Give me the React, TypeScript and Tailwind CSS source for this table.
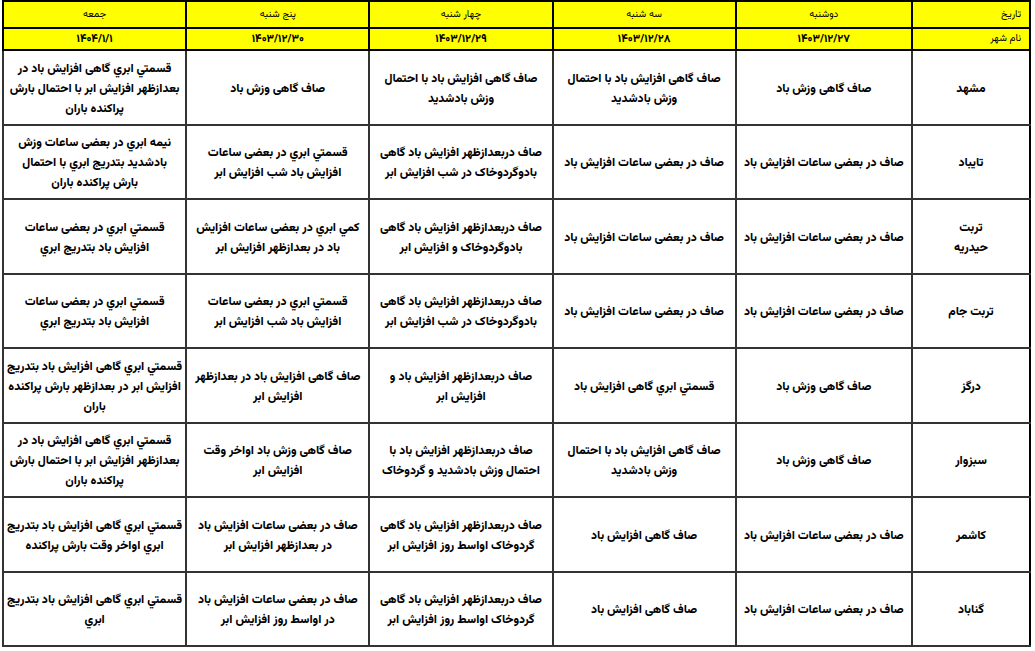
import React from "react";

const days = [
  { day: "دوشنبه", date: "۱۴۰۳/۱۲/۲۷" },
  { day: "سه شنبه", date: "۱۴۰۳/۱۲/۲۸" },
  { day: "چهار شنبه", date: "۱۴۰۳/۱۲/۲۹" },
  { day: "پنج شنبه", date: "۱۴۰۳/۱۲/۳۰" },
  { day: "جمعه", date: "۱۴۰۴/۱/۱" },
];

const rows: { city: string; cells: string[] }[] = [
  {
    city: "مشهد",
    cells: [
      "صاف گاهی وزش باد",
      "صاف گاهی افزایش باد با احتمال\nوزش بادشدید",
      "صاف گاهی افزایش باد با احتمال\nوزش بادشدید",
      "صاف گاهی وزش باد",
      "قسمتي ابري گاهی افزایش باد در\nبعدازظهر افزایش ابر با احتمال بارش\nپراکنده باران",
    ],
  },
  {
    city: "تایباد",
    cells: [
      "صاف در بعضی ساعات افزایش باد",
      "صاف در بعضی ساعات افزایش باد",
      "صاف دربعدازظهر افزایش باد گاهی\nبادوگردوخاک در شب افزایش ابر",
      "قسمتي ابري در بعضی ساعات\nافزایش باد شب افزایش ابر",
      "نیمه ابري در بعضی ساعات وزش\nبادشدید بتدریج ابري با احتمال\nبارش پراکنده باران",
    ],
  },
  {
    city: "تربت\nحیدریه",
    cells: [
      "صاف در بعضی ساعات افزایش باد",
      "صاف در بعضی ساعات افزایش باد",
      "صاف دربعدازظهر افزایش باد گاهی\nبادوگردوخاک و افزایش ابر",
      "کمي ابري در بعضی ساعات افزایش\nباد در بعدازظهر افزایش ابر",
      "قسمتي ابري در بعضی ساعات\nافزایش باد بتدریج ابري",
    ],
  },
  {
    city: "تربت جام",
    cells: [
      "صاف در بعضی ساعات افزایش باد",
      "صاف در بعضی ساعات افزایش باد",
      "صاف دربعدازظهر افزایش باد گاهی\nبادوگردوخاک در شب افزایش ابر",
      "قسمتي ابري در بعضی ساعات\nافزایش باد شب افزایش ابر",
      "قسمتي ابري در بعضی ساعات\nافزایش باد بتدریج ابري",
    ],
  },
  {
    city: "درگز",
    cells: [
      "صاف گاهی وزش باد",
      "قسمتي ابري گاهی افزایش باد",
      "صاف دربعدازظهر افزایش باد و\nافزایش ابر",
      "صاف گاهی افزایش باد در بعدازظهر\nافزایش ابر",
      "قسمتي ابري گاهی افزایش باد بتدریج\nافزایش ابر در بعدازظهر بارش پراکنده\nباران",
    ],
  },
  {
    city: "سبزوار",
    cells: [
      "صاف گاهی وزش باد",
      "صاف گاهی افزایش باد با احتمال\nوزش بادشدید",
      "صاف دربعدازظهر افزایش باد با\nاحتمال وزش بادشدید و گردوخاک",
      "صاف گاهی وزش باد اواخر وقت\nافزایش ابر",
      "قسمتي ابري گاهی افزایش باد در\nبعدازظهر افزایش ابر با احتمال بارش\nپراکنده باران",
    ],
  },
  {
    city: "کاشمر",
    cells: [
      "صاف در بعضی ساعات افزایش باد",
      "صاف گاهی افزایش باد",
      "صاف دربعدازظهر افزایش باد گاهی\nگردوخاک اواسط روز افزایش ابر",
      "صاف در بعضی ساعات افزایش باد\nدر بعدازظهر افزایش ابر",
      "قسمتي ابري گاهی افزایش باد بتدریج\nابري اواخر وقت بارش پراکنده",
    ],
  },
  {
    city: "گناباد",
    cells: [
      "صاف در بعضی ساعات افزایش باد",
      "صاف گاهی افزایش باد",
      "صاف دربعدازظهر افزایش باد گاهی\nگردوخاک اواسط روز افزایش ابر",
      "صاف در بعضی ساعات افزایش باد\nدر اواسط روز افزایش ابر",
      "قسمتي ابري گاهی افزایش باد بتدریج\nابري",
    ],
  },
];

export default function App() {
  return (
    <div className="w-[1035px] h-[651px] bg-white overflow-hidden pl-[2px] font-['Vazirmatn','Noto_Sans_Arabic',sans-serif]">
      <table dir="rtl" className="table-fixed border-collapse w-[1029px] text-black">
        <colgroup>
          <col className="w-[118px]" />
          <col className="w-[176px]" />
          <col className="w-[183px]" />
          <col className="w-[183px]" />
          <col className="w-[183px]" />
          <col className="w-[183px]" />
        </colgroup>
        <thead>
          <tr className="h-[27px] bg-[#ffff00]">
            <th className="border-2 border-black text-right pr-2 font-normal text-[10px] leading-none">تاریخ</th>
            {days.map((d) => (
              <th key={d.day} className="border-2 border-black text-center font-normal text-[10px] leading-none">
                {d.day}
              </th>
            ))}
          </tr>
          <tr className="h-[22px] bg-[#ffff00]">
            <th className="border-2 border-black text-right pr-2 font-normal text-[10px] leading-none">نام شهر</th>
            {days.map((d) => (
              <th key={d.date} className="border-2 border-black text-center font-extrabold text-[11px] leading-none">
                {d.date}
              </th>
            ))}
          </tr>
        </thead>
        <tbody>
          {rows.map((r, i) => (
            <tr key={i} className="h-[74.5px]">
              <td className="border-2 border-[#333333] border-r-black text-center font-extrabold text-[12px] leading-[20px] whitespace-pre pt-[3px]">
                {r.city}
              </td>
              {r.cells.map((c, j) => (
                <td
                  key={j}
                  className="border-2 border-[#333333] text-center font-extrabold text-[12px] leading-[20px] whitespace-pre px-0 pt-[3px]"
                >
                  {c}
                </td>
              ))}
            </tr>
          ))}
        </tbody>
      </table>
    </div>
  );
}
